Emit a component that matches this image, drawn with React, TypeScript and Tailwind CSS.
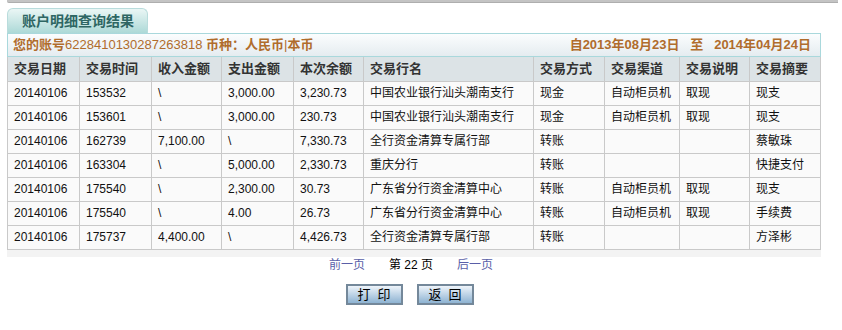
const rows = [
  ["20140106", "153532", "\\", "3,000.00", "3,230.73", "中国农业银行汕头潮南支行", "现金", "自动柜员机", "取现", "现支"],
  ["20140106", "153601", "\\", "3,000.00", "230.73", "中国农业银行汕头潮南支行", "现金", "自动柜员机", "取现", "现支"],
  ["20140106", "162739", "7,100.00", "\\", "7,330.73", "全行资金清算专属行部", "转账", "", "", "蔡敏珠"],
  ["20140106", "163304", "\\", "5,000.00", "2,330.73", "重庆分行", "转账", "", "", "快捷支付"],
  ["20140106", "175540", "\\", "2,300.00", "30.73", "广东省分行资金清算中心", "转账", "自动柜员机", "取现", "现支"],
  ["20140106", "175540", "\\", "4.00", "26.73", "广东省分行资金清算中心", "转账", "自动柜员机", "取现", "手续费"],
  ["20140106", "175737", "4,400.00", "\\", "4,426.73", "全行资金清算专属行部", "转账", "", "", "方泽彬"],
];

const headers = ["交易日期", "交易时间", "收入金额", "支出金额", "本次余额", "交易行名", "交易方式", "交易渠道", "交易说明", "交易摘要"];
const widths = ["w-[72px]", "w-[72px]", "w-[70px]", "w-[72px]", "w-[70px]", "w-[170px]", "w-[71px]", "w-[75px]", "w-[70px]", "w-[71px]"];

const font = "font-['Arial','Liberation_Sans','Noto_Sans_CJK_SC',sans-serif]";

const PageButton = ({ label }: { label: string }) => (
  <button className="w-[57px] h-[21px] border-2 border-[#74889a] bg-linear-to-b from-[#eef4fa] to-[#8eb3d2] text-[13px] text-black leading-none whitespace-pre">
    {label}
  </button>
);

export default function App() {
  return (
    <div className={`w-[842px] h-[330px] bg-white overflow-hidden ${font}`}>
      {/* top frame edge */}
      <div className="ml-[7px] w-[831px] h-[3px] bg-[#c4c4c4] border-b border-[#aeaeae] rounded-bl-[2px]" />

      <div className="ml-[7px] w-[814px]">
        {/* Tab */}
        <div className="mt-[5px] w-[141px] h-[25px] rounded-t-[6px] border border-b-0 border-[#b9dcdc] bg-linear-to-b from-[#eaf6f5] to-[#acd9d7] flex items-center pl-[14px]">
          <span className="text-[14px] font-bold text-[#2e6663]">账户明细查询结果</span>
        </div>

        {/* account bar */}
        <div className="h-[24px] border border-[#a9d8dc] bg-linear-to-b from-[#fbfdfe] to-[#e5ecf0] flex items-center justify-between pl-[5px] pr-[9px] text-[13px] text-[#b06c2c] font-bold">
          <span>
            您的账号<span className="font-normal">6228410130287263818</span> 币种：人民币<span className="font-normal">|</span>本币
          </span>
          <span className="whitespace-pre">自2013年08月23日   至   2014年04月24日</span>
        </div>

        {/* table */}
        <div className="bg-[#f3f3f3] pb-[7px]">
          <table className="w-[814px] border-collapse table-fixed">
            <thead>
              <tr className="h-[24px] bg-[#dce3e6]">
                {headers.map((h, i) => (
                  <th
                    key={h}
                    className={`${widths[i]} border border-[#c9c9c9] border-t-0 text-left pl-[6px] text-[13px] font-bold text-[#333] p-0`}
                  >
                    {h}
                  </th>
                ))}
              </tr>
            </thead>
            <tbody>
              {rows.map((r, ri) => (
                <tr key={ri} className="h-[24px] bg-[#fafafa]">
                  {r.map((c, ci) => (
                    <td
                      key={ci}
                      className="border border-[#c9c9c9] pl-[6px] p-0 text-[12px] text-[#111] whitespace-nowrap"
                    >
                      {c}
                    </td>
                  ))}
                </tr>
              ))}
            </tbody>
          </table>
        </div>

        {/* pager */}
        <div className="flex justify-center items-center gap-[24px] h-[16px] text-[12px] pr-[6px]">
          <span className="text-[#5a5fa8]">前一页</span>
          <span className="text-black">第 22 页</span>
          <span className="text-[#5a5fa8]">后一页</span>
        </div>

        {/* buttons */}
        <div className="flex justify-center gap-[14px] mt-[11px] pr-[9px]">
          <PageButton label="打  印" />
          <PageButton label="返  回" />
        </div>
      </div>
    </div>
  );
}
